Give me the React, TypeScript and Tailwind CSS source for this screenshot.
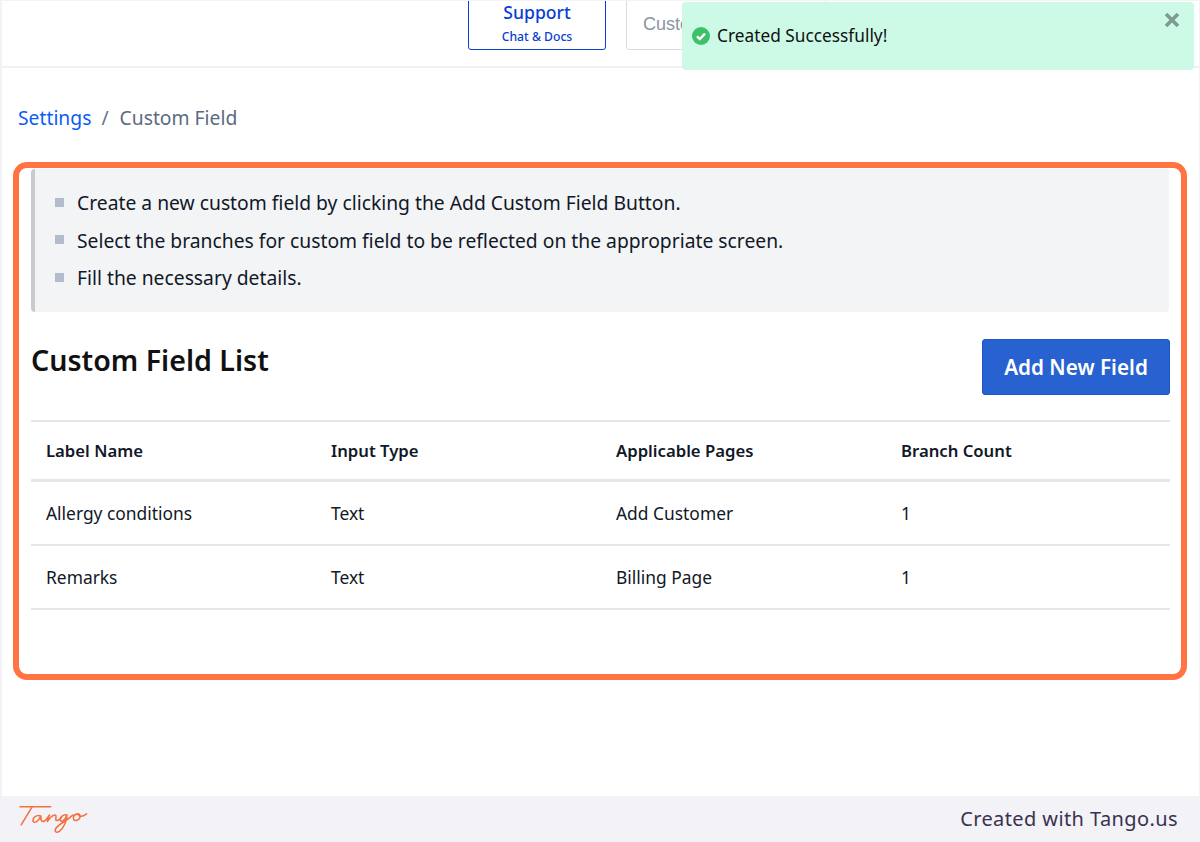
import React from 'react'

const notes = [
    "Create a new custom field by clicking the Add Custom Field Button.",
    "Select the branches for custom field to be reflected on the appropriate screen.",
    "Fill the necessary details.",
]

const columns = ["Label Name", "Input Type", "Applicable Pages", "Branch Count"]

const rows = [
    ["Allergy conditions", "Text", "Add Customer", "1"],
    ["Remarks", "Text", "Billing Page", "1"],
]

function TangoLogo() {
    return (
        <svg className="mt-[5px]" width="72" height="35" viewBox="0 0 66 32" fill="none" stroke="#f4703f" strokeWidth="1.4" strokeLinecap="round" strokeLinejoin="round">
            <path d="M1 2.5h28" strokeWidth="1.5" />
            <path d="M12 2.5L2 19" />
            <path d="M20 11c-4-2-8 2-7 5 1 2 5 0 7-5 0 3 0 5 2 5 2 0 4-3 6-6-1 2-2 5-2 6 2-3 4-6 7-6 2 0 0 4 1 5 2 1 4-2 5-3" />
            <path d="M44 10c-3-1-7 2-6 5 1 2 4 0 6-5 0 5-3 12-7 15-3 2-5 0-3-3 2-3 8-6 12-9 2-2 3-3 4-3" />
            <path d="M54 9c-3 0-5 3-4 5 1 2 5 1 6-2 0-2-1-3-2-3 1 3 4 3 8 0" />
        </svg>
    )
}

export default function App() {
    return (
        <div className="relative w-[1200px] h-[842px] overflow-hidden bg-[#f3f2f7] pl-[2px] pt-px pr-px font-['Noto_Sans',sans-serif]">
            <div className="flex flex-col h-[795px] bg-white">
                {/* header, the buttons run off the top of the capture */}
                <div className="flex items-end gap-5 h-[67px] shrink-0 overflow-hidden pl-[466px] pb-4 border-b-2 border-[#f1f1f3]">
                    <div className="flex flex-col items-center shrink-0 w-[138px] h-[64px] pt-[13px] rounded-[3px] border border-[#0b3fd1] text-[#0b3fd1] font-medium">
                        <span className="text-[17.6px] leading-[24px]">Support</span>
                        <span className="mt-[3px] text-[12.2px] leading-[20px]">Chat &amp; Docs</span>
                    </div>
                    <div className="shrink-0 w-[200px] h-[64px] pt-[25px] pl-4 rounded-[3px] border border-[#d9dde3] text-[#8a94a3] text-[18px] leading-[24px] font-['Liberation_Sans',sans-serif]">
                        Custom
                    </div>
                </div>

                <div className="px-[16px] pt-[35px]">
                    <div className="flex items-center text-[19.3px] leading-[30px]">
                        <span className="text-[#0b5cf5]">Settings</span>
                        <span className="ml-[10px] mr-[11px] text-[#64748b]">/</span>
                        <span className="text-[#5a6b80]">Custom Field</span>
                    </div>

                    <div className="mt-[36px] ml-[13px] mr-[13px]">
                        <ul className="flex flex-col gap-[7px] h-[143px] mr-px pt-[19px] pl-[20px] rounded-[4px] border-l-4 border-[#c9cacd] bg-[#f3f4f6]">
                            {notes.map((note) => (
                                <li key={note} className="flex items-center gap-[13px] text-[19.3px] leading-[30.5px] text-[#111827]">
                                    <span className="shrink-0 w-[9px] h-[9px] -mt-[2px] bg-[#b3bccb]"></span>
                                    {note}
                                </li>
                            ))}
                        </ul>

                        <div className="flex items-start justify-between mt-[27px]">
                            <h1 className="text-[28.6px] leading-[42px] font-semibold text-[#111111]">Custom Field List</h1>
                            <button className="w-[188px] h-[56px] pt-px rounded-[3px] border border-[#1d56c4] bg-[#2762d0] text-white text-[20.7px] font-semibold">
                                Add New Field
                            </button>
                        </div>

                        <div className="mt-[25px] border-t-2 border-[#e5e7eb]">
                            <div className="grid grid-cols-[285px_285px_285px_1fr] h-[60px] items-center border-b-[3px] border-[#e5e7eb] text-[16.7px] font-semibold text-[#111827]">
                                {columns.map((col) => (
                                    <span key={col} className="pl-[15px]">{col}</span>
                                ))}
                            </div>
                            {rows.map((row) => (
                                <div key={row[0]} className="grid grid-cols-[285px_285px_285px_1fr] h-[64px] pt-[1px] items-center border-b-2 border-[#e5e7eb] text-[17.4px] text-[#111827]">
                                    {row.map((cell, index) => (
                                        <span key={index} className="pl-[15px]">{cell}</span>
                                    ))}
                                </div>
                            ))}
                        </div>
                    </div>
                </div>
            </div>

            {/* footer */}
            <div className="flex items-center justify-between h-[46px] pl-[19px] pr-[22px] -ml-[2px] -mr-px">
                <TangoLogo />
                <span className="text-[20px] tracking-[0.4px] text-[#3a3150]">Created with Tango.us</span>
            </div>

            {/* toast over the header */}
            <div className="absolute left-[682px] top-[2px] flex items-center w-[512px] h-[68px] pl-[10px] rounded-[4px] bg-[#cdfae6]">
                <svg className="shrink-0" width="18" height="18" viewBox="0 0 18 18">
                    <circle cx="9" cy="9" r="9" fill="#3cc16a" />
                    <path d="M5 9.3l2.8 2.8L13 6.6" fill="none" stroke="#ffffff" strokeWidth="2.4" />
                </svg>
                <span className="ml-[7px] text-[17.3px] text-[#111111]">Created Successfully!</span>
                <svg className="absolute right-[14px] top-[10px]" width="16" height="16" viewBox="0 0 16 16">
                    <path d="M2 2l12 12M14 2L2 14" stroke="#7f9a90" strokeWidth="3.6" />
                </svg>
            </div>

            {/* tango highlight */}
            <div className="absolute left-[13px] top-[162px] w-[1174px] h-[518px] rounded-[14px] border-[6px] border-[#ff7442]"></div>
        </div>
    )
}
